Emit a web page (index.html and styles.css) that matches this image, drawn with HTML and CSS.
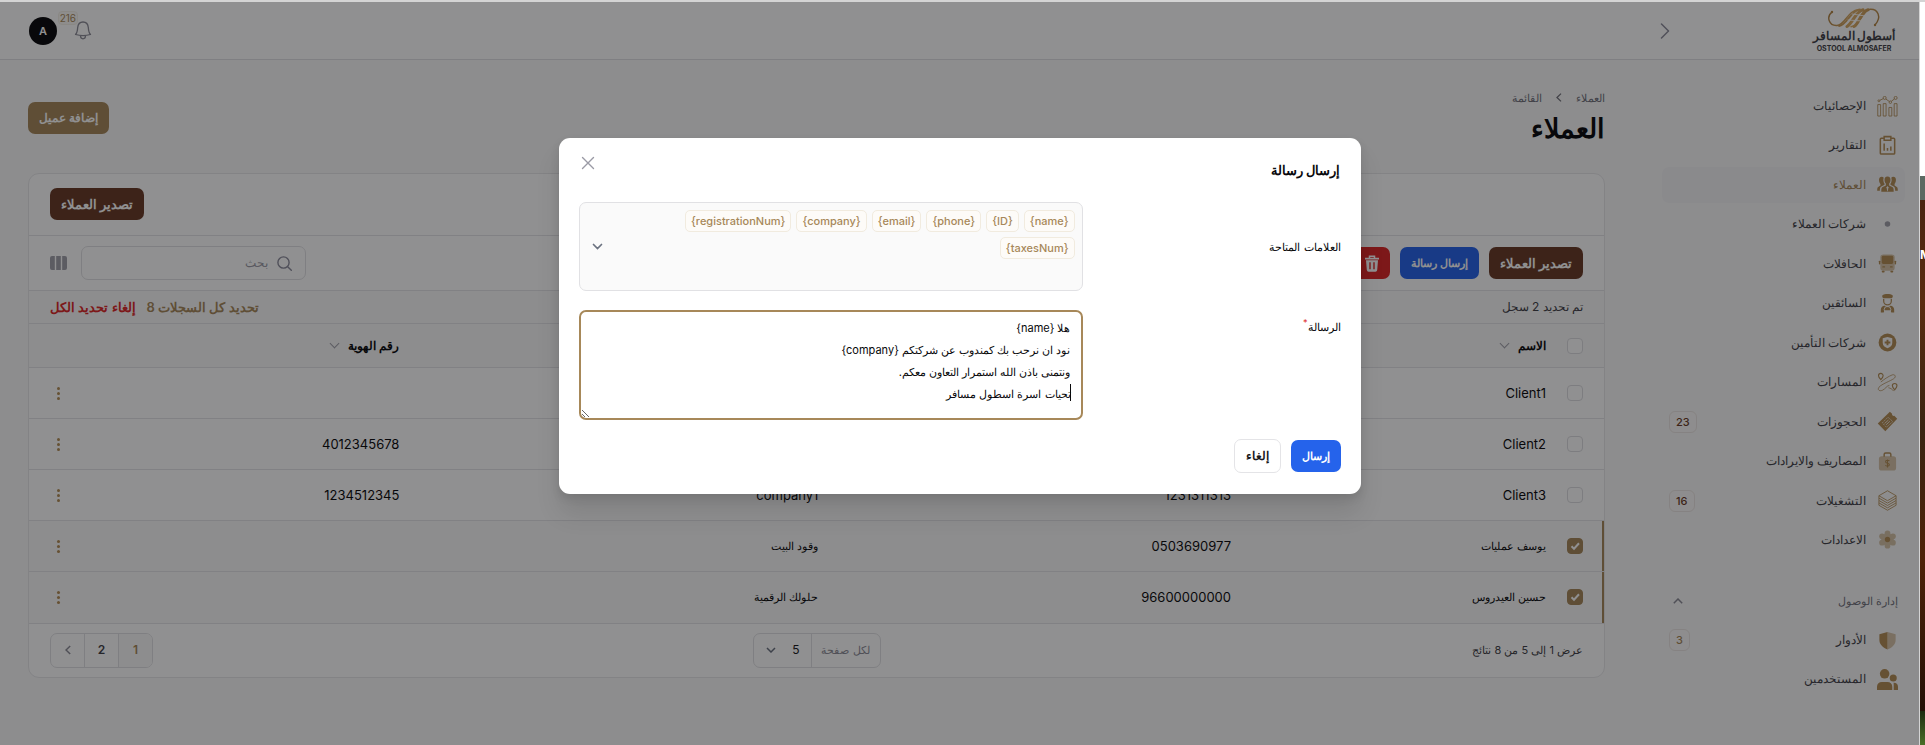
FILE: index.html
```html
<!DOCTYPE html>
<html lang="ar" dir="rtl">
<head>
<meta charset="utf-8">
<title>العملاء</title>
<link rel="stylesheet" href="styles.css">
</head>
<body>
<div class="desktop">
  <div class="wallpaper" aria-hidden="true"><div class="wall-white"></div><div class="wall-green"></div><div class="wall-wood"><span>M</span></div><div class="wall-grass"></div></div>
  <div class="app">
    <header class="topbar">
      <a class="logo" href="#">
        <svg width="54" height="20" viewBox="0 0 54 20" fill="none" stroke="url(#g)" stroke-linecap="round">
          <defs><linearGradient id="g" gradientUnits="userSpaceOnUse" x1="0" y1="0" x2="54" y2="20"><stop offset="0" stop-color="#a87a3a"/><stop offset=".5" stop-color="#dcae68"/><stop offset="1" stop-color="#a87a3a"/></linearGradient></defs>
          <circle cx="5" cy="4" r="1.200" fill="#b98a48" stroke="none"/><circle cx="48" cy="17" r="1.200" fill="#b98a48" stroke="none"/>
          <path d="M5 4C-1 9 2 18 10 17.500C18 17 21 2 32 1.500" stroke-width="1.400"/>
          <path d="M12 18C20 17 24 2 33 1.500" stroke-width="1.800"/>
          <path d="M20 18.500C25 16 29 3 36 1.800M27 18.500C32 16 34 3 41 1.800" stroke-width="3"/>
          <path d="M24 18.800C33 18 36 2 43 1.300C51 .8 55 9 48 17" stroke-width="1.400"/>
          <path d="M25 6l13 2M21 12l14 1" stroke="#fff" stroke-width=".9"/>
        </svg>
        <span class="logo-ar">أسطول المسافر</span>
        <span class="logo-en">OSTOOL ALMOSAFER</span>
      </a>
      <button class="icon-btn collapse" aria-label="طي القائمة"><svg width="10" height="16" viewBox="0 0 10 16" fill="none" stroke="#8b8b9b" stroke-width="1.500" stroke-linecap="round" stroke-linejoin="round"><path d="M1.500 1l7 7-7 7"/></svg></button>
      <div class="topbar-end">
        <button class="icon-btn bell" aria-label="الإشعارات">
          <svg width="18" height="19" viewBox="0 0 18 19" fill="none" stroke="#8b8b96" stroke-width="1.300" stroke-linejoin="round"><path d="M1.500 13.500C3.300 11.800 3.500 9.500 3.700 6.500C4 3 6 1 9 1s5 2 5.300 5.500c.2 3 .4 5.300 2.200 7C12 14.800 6 14.800 1.500 13.500z"/><path d="M6.500 14.600C6.500 16.800 7.500 17.800 9 17.800s2.500-1 2.500-3.200"/></svg>
          <span class="bell-count">216</span>
        </button>
        <button class="avatar">A</button>
      </div>
    </header>
    <div class="body">
      <nav class="sidebar">
        <div class="nav-main">
          <a class="nav-item" href="#"><svg class="ico" viewBox="0 0 22 22" fill="none" stroke="#b38d55" stroke-width=".9"><path d="M.8 9h3v12h-3zM6.500 8h3v13h-3zM12.500 12h3v9h-3zM18 8h3v13h-3z"/><circle cx="2" cy="5" r="1"/><circle cx="8" cy="2" r="1.600"/><circle cx="14" cy="6.500" r="1.300"/><circle cx="19.500" cy="2" r="1.600"/><path d="M3 4.500l3.500-1.700M9.300 3.200L13 5.800M15 5.500l3.300-2.400"/></svg><span>الإحصائيات</span></a>
          <a class="nav-item" href="#"><svg class="ico" viewBox="0 0 22 22" fill="none" stroke="#b38d55" stroke-width="1.600"><path d="M7.500 3.500H4.500a1 1 0 0 0-1 1v14.500a1 1 0 0 0 1 1h13a1 1 0 0 0 1-1V4.500a1 1 0 0 0-1-1h-3M7.500 1.700h7v3.800h-7z"/><path d="M7.500 9v7.500M11 13.500v3M14.500 12v4.500"/></svg><span>التقارير</span></a>
          <a class="nav-item active" href="#"><svg class="ico" viewBox="0 0 22 22" fill="#b38d55"><path d="M11 2.500c2.300 0 3.300 1.500 3.100 4-.1 1.800-.7 2.600-1.400 3.500v2l3.300 1.700c1.200.7 1.500 1.800 1.500 4.800h-13c0-3 .3-4.100 1.500-4.800l3.300-1.700v-2c-.7-.9-1.300-1.700-1.400-3.500-.2-2.500.8-4 3.100-4z"/><path d="M5 3c1 0 1.700.3 2 .8-.7 1.700-.4 4.700.9 6.500v1L4.500 13C3.300 13.700 3 15 3 17.500H.2c0-2.500.2-3.500 1.400-4.200l2-1.200v-1.600C1.700 8.500 1.200 3 5 3zM17 3c-1 0-1.700.3-2 .8.7 1.700.4 4.700-.9 6.500v1l3.400 1.700c1.200.7 1.500 2 1.500 4.500h2.800c0-2.500-.2-3.500-1.400-4.200l-2-1.200v-1.600C20.300 8.500 20.800 3 17 3z"/><path d="M11 12.500l1 1.500-.7 4h-.6l-.7-4z" fill="#f4f4f5"/></svg><span>العملاء</span></a>
          <a class="nav-item" href="#"><svg class="ico" viewBox="0 0 22 22" fill="#a1a1aa"><circle cx="11" cy="10.500" r="2.900"/></svg><span>شركات العملاء</span></a>
          <a class="nav-item" href="#"><svg class="ico" viewBox="0 0 22 22" fill="#b38d55"><rect x="3.500" y="1.500" width="15" height="17" rx="3" opacity=".5"/><rect x="5" y="3" width="12" height="8.500" rx="1.500"/><rect x="2" y="8" width="1.500" height="4" rx=".7"/><rect x="18.500" y="8" width="1.500" height="4" rx=".7"/><rect x="5.500" y="14" width="3" height="1.300" rx=".6"/><rect x="13.500" y="14" width="3" height="1.300" rx=".6"/><rect x="5" y="18.500" width="3" height="2" rx=".8"/><rect x="14" y="18.500" width="3" height="2" rx=".8"/></svg><span>الحافلات</span></a>
          <a class="nav-item" href="#"><svg class="ico" viewBox="0 0 22 22" fill="#b38d55"><path d="M5.500 2.500C8 .7 14 .7 16.500 2.500v1.700l-1 1.300h-9l-1-1.300z"/><path d="M7 6.300v2.200a4 4 0 0 0 8 0V6.300" fill="none" stroke="#b38d55" stroke-width="1.300"/><path d="M4 20.500v-3c0-2.500 1.500-4 4-4.200l3 1.700 3-1.700c2.500.2 4 1.700 4 4.200v3h-3l-1-2.500H8l-1 2.500z"/><circle cx="11" cy="17.500" r="3.500" fill="none" stroke="#fafafa" stroke-width="1"/></svg><span>السائقين</span></a>
          <a class="nav-item" href="#"><svg class="ico" viewBox="0 0 22 22" fill="#b38d55"><circle cx="11" cy="11" r="9.300"/><path d="M6 6.500l5-1.300 5 1.300v5c0 2.500-2 4.500-5 5.500-3-1-5-3-5-5.500z" fill="#fafafa"/><path d="M10 8h2v2h2v2h-2v2h-2v-2H8v-2h2z"/></svg><span>شركات التأمين</span></a>
          <a class="nav-item" href="#"><svg class="ico" viewBox="0 0 22 22" fill="none" stroke="#b38d55" stroke-width="1.200"><path d="M4 1.500a2.400 2.400 0 0 1 2.400 2.400C6.400 5.500 4 8 4 8S1.600 5.500 1.600 3.900A2.400 2.400 0 0 1 4 1.500zM18.500 12a2.400 2.400 0 0 1 2.400 2.400c0 1.600-2.400 4.300-2.400 4.300s-2.400-2.700-2.400-4.300a2.400 2.400 0 0 1 2.400-2.400z"/><path d="M4 10.500C7 8 12 4.500 16 3c3-.8 4.500 2 1.500 4C14 9.500 5 12.500 2 16c-2 3 1 4.500 4 3s4-4.500 7-5" stroke-width=".8"/><path d="M12 16.500c2 .3 4 1.500 5.500 3.500" stroke-width=".8"/></svg><span>المسارات</span></a>
          <a class="nav-item" href="#"><svg class="ico" viewBox="0 0 22 22" fill="#b38d55"><path d="M.8 13.200L13.500.8l2.300 2c-.3 1.500.8 2.600 2.300 2.300l3.100 3L8.700 21.200z"/><path d="M5.500 12.500l6-6 5 4.500-6.500 6z" fill="none" stroke="#fafafa" stroke-width=".7" stroke-dasharray="2 1"/><path d="M8 13l4-3.500M9.500 14.500l4-3.700" stroke="#fafafa" stroke-width=".8"/></svg><span>الحجوزات</span><b class="badge brown">23</b></a>
          <a class="nav-item" href="#"><svg class="ico" viewBox="0 0 22 22" fill="#b38d55"><rect x="2" y="5.500" width="18" height="15" rx="3" opacity=".5"/><path d="M7.500 6V3.500a1.500 1.500 0 0 1 1.500-1.500h4a1.500 1.500 0 0 1 1.500 1.500V6" fill="none" stroke="#b38d55" stroke-width="1.500"/><path d="M13 10.500c-1-1.300-4-1-4 .7 0 2 4 1.200 4 3.200 0 1.700-3 2-4.200.5M11 8.800v8.400" fill="none" stroke="#b38d55" stroke-width="1.100"/></svg><span>المصاريف والايرادات</span></a>
          <a class="nav-item" href="#"><svg class="ico" viewBox="0 0 22 22" fill="none" stroke="#b38d55" stroke-width=".9" stroke-linejoin="round"><path d="M11 .8l9 5.200-9 5.200L2 6z"/><path d="M2 6v2.500l9 5.200 9-5.200V6M2 8.500V11l9 5.200 9-5.200V8.500M2 11v2.500l9 5.200 9-5.200V11M2 13.500V16l9 5.200 9-5.200v-2.500"/></svg><span>التشغيلات</span><b class="badge brown">16</b></a>
          <a class="nav-item" href="#"><svg class="ico" viewBox="0 0 22 22" fill="#b38d55"><g opacity=".5"><circle cx="11" cy="11" r="6.500"/><circle cx="11" cy="4.500" r="3"/><circle cx="11" cy="17.500" r="3"/><circle cx="5.300" cy="7.700" r="3"/><circle cx="16.700" cy="7.700" r="3"/><circle cx="5.300" cy="14.300" r="3"/><circle cx="16.700" cy="14.300" r="3"/></g><circle cx="11" cy="11" r="2.800"/></svg><span>الاعدادات</span></a>
        </div>
        <div class="nav-group">
          <button class="group-head"><span>إدارة الوصول</span><svg width="10" height="6" viewBox="0 0 10 6" fill="none" stroke="#8b8b96" stroke-width="1.500"><path d="M.8 5.200L5 1l4.200 4.200"/></svg></button>
          <a class="nav-item" href="#"><svg class="ico" viewBox="0 0 22 22" fill="#b38d55"><path d="M11 2l8.500 2.500v6c0 5-4 8-8.500 10z" opacity=".5"/><path d="M11 2L2.500 4.500v6c0 5 4 8 8.500 10z"/></svg><span>الأدوار</span><b class="badge gold">3</b></a>
          <a class="nav-item" href="#"><svg class="ico" viewBox="0 0 22 22" fill="#b38d55"><circle cx="8" cy="5" r="5"/><circle cx="17" cy="9.500" r="3.700"/><path d="M0 22v-3.500A5 5 0 0 1 5 13.500h6a5 5 0 0 1 5 5V22zM17.500 22v-6.500c0-.6-.1-.9-.3-1.200 2.800-.2 4.800 1.300 4.800 4.200V22z"/></svg><span>المستخدمين</span></a>
        </div>
      </nav>
      <main class="main">
        <div class="page-head">
          <div>
            <ol class="crumbs"><li><a href="#">العملاء</a></li><li class="sep"><svg width="6" height="9" viewBox="0 0 6 9" fill="none" stroke="#71717a" stroke-width="1.300"><path d="M5 .6L1 4.500l4 3.900"/></svg></li><li><a href="#">القائمة</a></li></ol>
            <h1>العملاء</h1>
          </div>
          <button class="btn gold-btn">إضافة عميل</button>
        </div>
        <section class="card">
          <div class="card-actions"><button class="btn brown-btn">تصدير العملاء</button></div>
          <div class="toolbar">
            <div class="bulk">
              <button class="btn brown-btn">تصدير العملاء</button>
              <button class="btn blue-btn">إرسال رسالة</button>
              <button class="btn red-btn" aria-label="حذف"><svg width="14" height="17" viewBox="0 0 14 17"><path d="M4.500 3V1.200h5V3" fill="none" stroke="#fff" stroke-width="1.500"/><path d="M0 2.700h14v1.800H0zM1 5.300h12l-.8 9.800a1.800 1.800 0 0 1-1.800 1.600H3.600a1.800 1.800 0 0 1-1.800-1.600z" fill="#fff"/><path d="M5 7.200v7M9 7.200v7" stroke="#dc2626" stroke-width="1.400"/></svg></button>
            </div>
            <div class="search-side">
              <label class="search"><svg width="15" height="15" viewBox="0 0 15 15" fill="none" stroke="#8b8b9b" stroke-width="1.400" stroke-linecap="round"><circle cx="6.500" cy="6.500" r="5.600"/><path d="M10.700 10.700l3.600 3.600"/></svg><input type="search" placeholder="بحث" aria-label="بحث"></label>
              <button class="icon-btn" aria-label="الأعمدة"><svg width="17" height="14" viewBox="0 0 17 14" fill="#a1a1aa"><path d="M2 0h2.800v14H2a2 2 0 0 1-2-2V2a2 2 0 0 1 2-2zM6.200 0h4.600v14H6.200zM12.200 0H15a2 2 0 0 1 2 2v10a2 2 0 0 1-2 2h-2.800z"/></svg></button>
            </div>
          </div>
          <div class="selection"><span>تم تحديد 2 سجل</span><div class="sel-links"><a class="sel-all" href="#">تحديد كل السجلات 8</a><a class="sel-none" href="#">إلغاء تحديد الكل</a></div></div>
          <table>
            <colgroup><col class="c-check"><col class="c-name"><col class="c-phone"><col class="c-company"><col><col class="c-act"></colgroup>
            <thead><tr><th><input type="checkbox" aria-label="تحديد الكل"></th><th><button class="sort">الاسم <i class="chev"></i></button></th><th>الهاتف</th><th>الشركة</th><th><button class="sort">رقم الهوية <i class="chev"></i></button></th><th></th></tr></thead>
            <tbody>
              <tr><td><input type="checkbox" aria-label="Client1"></td><td>Client1</td><td></td><td></td><td></td><td><button class="dots" aria-label="إجراءات"><i></i><i></i><i></i></button></td></tr>
              <tr><td><input type="checkbox" aria-label="Client2"></td><td>Client2</td><td></td><td></td><td>4012345678</td><td><button class="dots" aria-label="إجراءات"><i></i><i></i><i></i></button></td></tr>
              <tr><td><input type="checkbox" aria-label="Client3"></td><td>Client3</td><td>1231311313</td><td>company1</td><td>1234512345</td><td><button class="dots" aria-label="إجراءات"><i></i><i></i><i></i></button></td></tr>
              <tr class="selected"><td><input type="checkbox" checked aria-label="يوسف عمليات"></td><td class="ar">يوسف عمليات</td><td>0503690977</td><td class="ar">وقود البيت</td><td></td><td><button class="dots" aria-label="إجراءات"><i></i><i></i><i></i></button></td></tr>
              <tr class="selected"><td><input type="checkbox" checked aria-label="حسين العيدروس"></td><td class="ar">حسين العيدروس</td><td>96600000000</td><td class="ar">حلولك الرقمية</td><td></td><td><button class="dots" aria-label="إجراءات"><i></i><i></i><i></i></button></td></tr>
            </tbody>
          </table>
          <footer class="card-foot">
            <span class="results">عرض 1 إلى 5 من 8 نتائج</span>
            <div class="per-page"><label for="pp">لكل صفحة</label><select id="pp"><option>5</option></select></div>
            <div class="pager"><button class="current">1</button><button>2</button><button aria-label="التالي"><svg width="6" height="10" viewBox="0 0 6 10" fill="none" stroke="#8b8b96" stroke-width="1.500"><path d="M5.200 1L1 5l4.200 4"/></svg></button></div>
          </footer>
        </section>
      </main>
    </div>
    <div class="overlay">
      <form class="modal" role="dialog" aria-labelledby="mt">
        <div class="modal-head"><h2 id="mt">إرسال رسالة</h2><button type="button" class="icon-btn close" aria-label="إغلاق"><svg width="14" height="14" viewBox="0 0 14 14" stroke="#9a9aa5" stroke-width="1.400" stroke-linecap="round"><path d="M1.500 1.500l11 11M12.500 1.500l-11 11"/></svg></button></div>
        <div class="field">
          <span class="label mid" id="tl">العلامات المتاحة</span>
          <div class="tags" role="group" aria-labelledby="tl">
            <div class="chips"><bdi>{name}</bdi><bdi>{ID}</bdi><bdi>{phone}</bdi><bdi>{email}</bdi><bdi>{company}</bdi><bdi>{registrationNum}</bdi><bdi>{taxesNum}</bdi></div>
            <svg width="11" height="7" viewBox="0 0 11 7" fill="none" stroke="#6b7280" stroke-width="1.700" stroke-linecap="round"><path d="M1.500 1.500l4 4 4-4"/></svg>
          </div>
        </div>
        <div class="field">
          <label class="label" for="msg">الرسالة<sup>*</sup></label>
          <div class="area"><textarea id="msg" rows="4">هلا {name}
نود ان نرحب بك كمندوب عن شركتكم {company}
ونتمنى باذن الله استمرار التعاون معكم.
تحيات اسرة اسطول مسافر</textarea><i class="caret"></i></div>
        </div>
        <div class="modal-foot"><button type="button" class="btn blue-btn">إرسال</button><button type="button" class="btn outline-btn">إلغاء</button></div>
      </form>
    </div>
  </div>
</div>
</body>
</html>
```
FILE: styles.css
```css
* { box-sizing: border-box; margin: 0; padding: 0; }
body { font-family: Inter, sans-serif; font-size: 12px; line-height: 18px; color: #09090b; background: #fff; }
button, input, select, textarea { font: inherit; color: inherit; border: 0; background: none; }
button { cursor: pointer; }
a { color: inherit; text-decoration: none; }
svg { display: block; flex: none; }
.desktop { display: flex; min-height: 100vh; border-top: 2px solid #d4d4d4; }

.wallpaper { flex: 0 0 5px; overflow: hidden; display: flex; flex-direction: column; }
.wall-white { height: 174px; background: #fff; }
.wall-green { height: 24px; background: #5c6a62; }
.wall-wood { flex: 1; background: linear-gradient(#4a2410, #5a2c10 20%, #3a2412 45%, #4e2208 70%, #241006); }
.wall-wood span { display: block; margin-top: 46px; color: #fff; font-weight: 700; direction: ltr; }
.wall-grass { height: 34px; background: linear-gradient(#1c2c10, #4a7028); }

.app { flex: 1; min-width: 0; position: relative; display: flex; flex-direction: column; background: #fafafa; border-right: 1px solid #d4d4d4; }
.topbar { display: flex; align-items: center; height: 58px; padding: 0 25px 0 29px; background: #fff; border-bottom: 1px solid #e0e0e3; }
.logo { display: flex; flex-direction: column; align-items: center; width: 80px; color: #3f3f46; }
.logo-ar { font-size: 12px; line-height: 16px; font-weight: 700; white-space: nowrap; }
.logo-en { font: 700 7px/9px Inter, sans-serif; white-space: nowrap; }
.icon-btn { display: grid; place-items: center; }
.collapse { margin-right: 144px; }
.topbar-end { display: flex; align-items: center; gap: 17px; margin-right: auto; }
.bell { position: relative; }
.bell-count { position: absolute; top: -10px; right: 14px; border: 1px solid #f4f0e8; border-radius: 4px; padding: 0 1px; font-size: 10px; line-height: 12px; color: #a78859; background: #fcfaf6; }
.avatar { width: 28px; height: 28px; border-radius: 50%; background: #09090b; color: #fff; font-weight: 600; font-size: 11px; text-align: center; }

.body { flex: 1; display: flex; }
.sidebar { flex: 0 0 286px; padding: 28px 14px 28px 29px; color: #3f3f46; }
.nav-main { display: flex; flex-direction: column; justify-content: space-between; min-height: 470px; }
.nav-item { display: flex; align-items: center; gap: 11px; height: 36px; padding: 0 7px; border-radius: 7px; }
.nav-item.active { background: #f4f4f6; color: #a78859; }
.ico { width: 21px; height: 21px; }
.badge { margin-right: auto; min-width: 21px; padding: 0 6px; border: 1px solid #ece6e3; border-radius: 6px; background: #fcfaf9; font-size: 11px; line-height: 20px; font-weight: 500; text-align: center; }
.brown { color: #693a26; }
.gold { color: #a78859; }
.nav-group { display: flex; flex-direction: column; gap: 3px; margin-top: 25px; }
.group-head { display: flex; align-items: center; justify-content: space-between; height: 36px; padding: 0 7px 0 11px; font-size: 11px; color: #71717a; }

.main { flex: 1; min-width: 0; padding: 28px; }
.page-head { display: flex; align-items: center; justify-content: space-between; height: 59px; }
.crumbs { display: flex; align-items: center; gap: 14px; list-style: none; font-size: 11px; color: #71717a; }
h1 { margin-top: 4px; font-size: 27px; line-height: 36px; font-weight: 700; }
.btn { height: 32px; padding: 0 11px; border-radius: 7px; font-weight: 600; color: #fff; white-space: nowrap; }
.gold-btn { background: #a78859; }
.brown-btn { background: #693a26; font-size: 13px; }
.blue-btn { background: #2563eb; font-size: 11px; }
.red-btn { background: #dc2626; }
.outline-btn { height: 34px; border: 1px solid #e4e4e7; color: #18181b; }

.card { margin-top: 26px; background: #fff; border: 1px solid #e8e8ea; border-radius: 11px; overflow: hidden; }
.card-actions { display: flex; justify-content: flex-end; padding: 14px 21px 15px; }
.toolbar { display: flex; align-items: center; justify-content: space-between; height: 55px; padding: 0 21px; border-top: 1px solid #e4e4e7; }
.bulk { display: flex; gap: 10px; }
.search-side { display: flex; align-items: center; gap: 14px; }
.search { display: flex; align-items: center; gap: 9px; width: 225px; height: 34px; padding: 0 13px; border: 1px solid #e1e1e4; border-radius: 7px; }
.search input { flex: 1; min-width: 0; outline: 0; }
.search input::placeholder { color: #9a9aa5; opacity: 1; }
.selection { display: flex; align-items: center; justify-content: space-between; height: 33px; padding: 0 21px; border-top: 1px solid #e4e4e7; background: #fafafa; color: #3f3f46; }
.sel-links { display: flex; gap: 11px; font-size: 13px; font-weight: 600; }
.sel-all { color: #a78859; }
.sel-none { color: #dc2626; }

table { width: 100%; table-layout: fixed; border-collapse: collapse; }
.c-check { width: 47px; }
.c-name { width: 20%; }
.c-phone { width: 26.2%; }
.c-company { width: 26.6%; }
.c-act { width: 48px; }
th { height: 44px; padding: 0 11px; background: #fafafa; border-top: 1px solid #e4e4e7; text-align: right; font-weight: 600; }
td { height: 51px; padding: 0 11px; border-top: 1px solid #e4e4e7; text-align: right; font-size: 13px; }
td.ar { font-size: 11px; }
th:first-child, td:first-child { padding: 0 21px 0 10px; }
td:last-child { padding: 0; }
.selected td { background: #fafafa; }
.selected td:first-child { box-shadow: inset -2px 0 #a78859; }
.sort { display: flex; align-items: center; gap: 10px; font-weight: 600; }
.chev { width: 7px; height: 7px; margin: 0 0 4px 2px; border: solid #a1a1aa; border-width: 0 1px 1px 0; transform: rotate(45deg); }
input[type="checkbox"] { appearance: none; display: block; width: 16px; height: 16px; border: 1px solid #dcdce0; border-radius: 4px; background: #fff; }
input[type="checkbox"]:checked { border-color: #a78859; background: #a78859 url("data:image/svg+xml,%3Csvg xmlns='http://www.w3.org/2000/svg' viewBox='0 0 14 14' fill='none' stroke='white' stroke-width='2'%3E%3Cpath d='M3.500 7.200l2.500 2.500 5-5.400'/%3E%3C/svg%3E") center / 14px; }
.dots { display: flex; flex-direction: column; gap: 2px; align-items: center; width: 17px; margin-right: 10px; }
.dots i { width: 3px; height: 3px; border-radius: 50%; background: #b38d55; }

.card-foot { display: grid; grid-template-columns: 1fr auto 1fr; align-items: center; height: 54px; padding: 0 21px; border-top: 1px solid #e4e4e7; color: #3f3f46; }
.results { font-size: 11px; }
.per-page { display: flex; height: 35px; border: 1px solid #e1e1e4; border-radius: 7px; }
.per-page label { width: 69px; line-height: 33px; text-align: center; font-size: 11px; color: #8b8b96; border-left: 1px solid #e1e1e4; }
.per-page select { appearance: none; width: 57px; padding: 0 11px; color: #18181b; background: url("data:image/svg+xml,%3Csvg xmlns='http://www.w3.org/2000/svg' viewBox='0 0 10 6' fill='none' stroke='%236b7280' stroke-width='1.500'%3E%3Cpath d='M1 1l4 4 4-4'/%3E%3C/svg%3E") 12px center / 10px 6px no-repeat; }
.pager { justify-self: end; display: flex; height: 35px; border: 1px solid #e1e1e4; border-radius: 7px; overflow: hidden; }
.pager button { display: grid; place-items: center; width: 33px; font-weight: 600; }
.pager button + button { width: 34px; border-right: 1px solid #e1e1e4; }
.pager .current { color: #a78859; background: #fafafa; }

.overlay { position: absolute; inset: 0; display: flex; justify-content: center; align-items: flex-start; padding-top: 136px; background: rgba(9, 9, 11, .45); }
.modal { width: 802px; max-width: 94%; padding: 21px 20px; border-radius: 11px; background: #fff; box-shadow: 0 20px 25px rgba(0, 0, 0, .1), 0 4px 10px rgba(0, 0, 0, .1); }
.modal-head { display: flex; justify-content: space-between; align-items: flex-start; height: 43px; }
.modal-head h2 { font-size: 13px; line-height: 22px; font-weight: 600; }
.close { margin: -3px 0 0 2px; }
.field { display: grid; grid-template-columns: 1fr 2fr; column-gap: 6px; align-items: start; margin-bottom: 19px; font-size: 11px; }
.label { margin-top: 8px; }
.label.mid { align-self: center; margin-top: 0; }
.label sup { color: #dc2626; line-height: 1px; }
.tags { display: flex; align-items: center; justify-content: space-between; min-height: 89px; padding: 7px; padding-left: 12px; border: 1px solid #e1e1e4; border-radius: 7px; background: #fafafa; }
.chips { display: flex; flex-wrap: wrap; align-self: flex-start; gap: 5px; width: 410px; }
.chips bdi { padding: 0 5px; border: 1px solid #f1ebdf; border-radius: 5px; background: #fdfbf8; color: #a78859; font-size: 11px; line-height: 20px; font-weight: 500; }
.area { position: relative; }
textarea { display: block; width: 100%; height: 110px; padding: 5px 10px; border: 2px solid #a78859; border-radius: 7px; line-height: 22px; outline: 0; resize: both; }
.caret { position: absolute; top: 74px; right: 12px; width: 1px; height: 17px; background: #09090b; }
.modal-foot { display: flex; align-items: center; gap: 10px; }
```
